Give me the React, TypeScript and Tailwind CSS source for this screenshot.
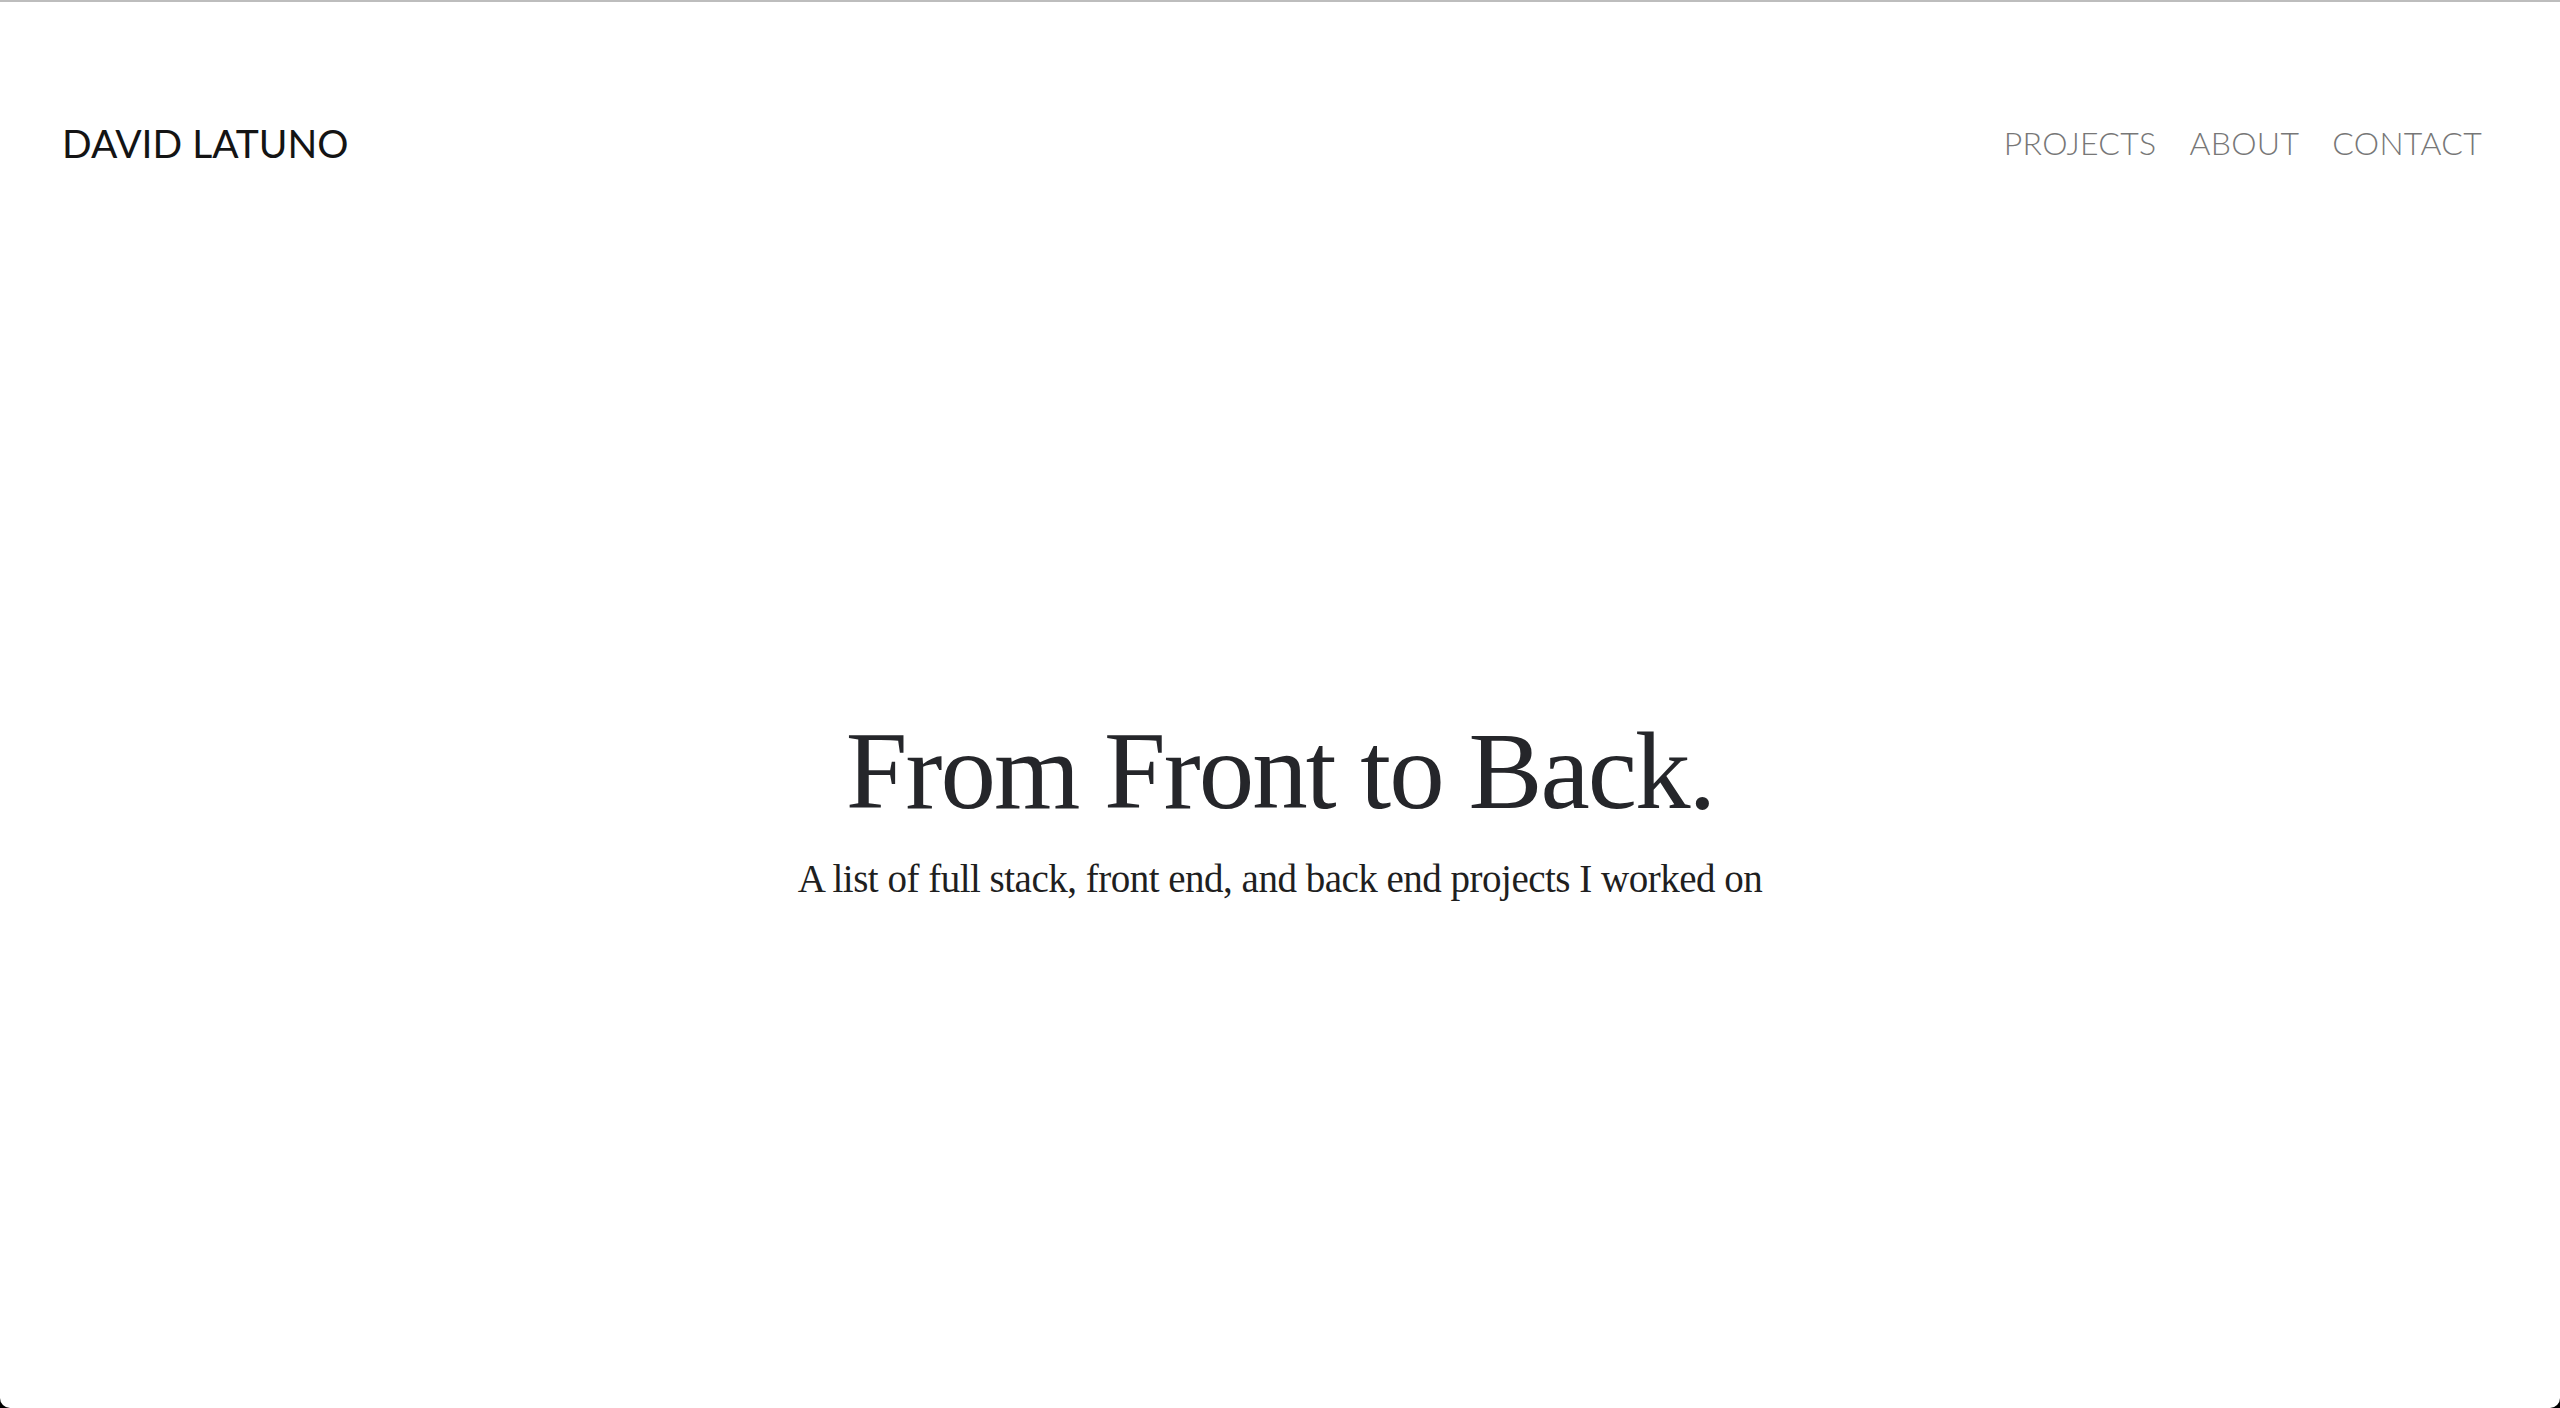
export default function App() {
  const navLinks = ["PROJECTS", "ABOUT", "CONTACT"];

  return (
    <div className="bg-black">
      <div className="flex h-[1408px] flex-col rounded-b-[10px] border-t-2 border-[#bdbdbd] bg-white">
        {/* Header */}
        <header className="flex h-[282px] items-center justify-between pl-[62px] pr-[78px] font-['Lato',sans-serif]">
          <a href="#" className="text-[39px] font-normal leading-none text-[#141414]">
            DAVID LATUNO
          </a>
          <nav className="flex items-center gap-[33px]">
            {navLinks.map((link) => (
              <a key={link} href="#" className="text-[32px] font-light leading-none tracking-[0.3px] text-[#777777]">
                {link}
              </a>
            ))}
          </nav>
        </header>

        {/* Hero */}
        <section className="flex flex-col items-center pt-[420px] font-['Liberation_Serif',serif] text-[#25262a]">
          <h1 className="text-[111px] leading-[1.2] tracking-[-2px]">From Front to Back.</h1>
          <p className="mt-[19px] text-[39px] leading-[1.2] tracking-[-0.5px] text-[#1f1f1f]">
            A list of full stack, front end, and back end projects I worked on
          </p>
        </section>
      </div>
    </div>
  );
}
